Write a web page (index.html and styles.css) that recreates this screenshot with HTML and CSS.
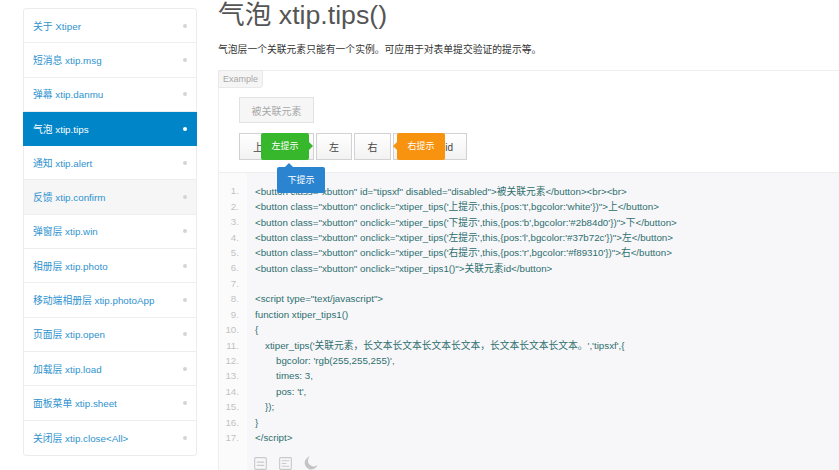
FILE: index.html
```html
<!DOCTYPE html>
<html lang="zh">
<head>
<meta charset="utf-8">
<title>气泡 xtip.tips()</title>
<link rel="stylesheet" href="styles.css">
</head>
<body>
<div class="page">
  <nav class="side">
    <a class="item"><span>关于 Xtiper</span><i class="dot"></i></a>
    <a class="item"><span>短消息 xtip.msg</span><i class="dot"></i></a>
    <a class="item"><span>弹幕 xtip.danmu</span><i class="dot"></i></a>
    <a class="item active"><span>气泡 xtip.tips</span><i class="dot"></i></a>
    <a class="item"><span>通知 xtip.alert</span><i class="dot"></i></a>
    <a class="item hover"><span>反馈 xtip.confirm</span><i class="dot"></i></a>
    <a class="item"><span>弹窗层 xtip.win</span><i class="dot"></i></a>
    <a class="item"><span>相册层 xtip.photo</span><i class="dot"></i></a>
    <a class="item"><span>移动端相册层 xtip.photoApp</span><i class="dot"></i></a>
    <a class="item"><span>页面层 xtip.open</span><i class="dot"></i></a>
    <a class="item"><span>加载层 xtip.load</span><i class="dot"></i></a>
    <a class="item"><span>面板菜单 xtip.sheet</span><i class="dot"></i></a>
    <a class="item"><span>关闭层 xtip.close&lt;All&gt;</span><i class="dot"></i></a>
  </nav>
  <main class="main">
    <h1 class="title">气泡 xtip.tips()</h1>
    <p class="desc">气泡层一个关联元素只能有一个实例。可应用于对表单提交验证的提示等。</p>
    <section class="box">
      <div class="tag">Example</div>
      <div class="demo">
        <div class="row"><button class="xbtn wide" disabled>被关联元素</button></div>
        <div class="row">
          <button class="xbtn up">上</button>
          <button class="xbtn sq">左</button>
          <button class="xbtn sq">右</button>
          <button class="xbtn last">关联元素id</button>
        </div>
        <div class="tip green">左提示</div>
        <div class="tip orange">右提示</div>
        <div class="tip blue">下提示</div>
      </div>
      <div class="code">
        <ol class="lines">
          <li><b>1.</b><code>&lt;button class="xbutton" id="tipsxf" disabled="disabled"&gt;被关联元素&lt;/button&gt;&lt;br&gt;&lt;br&gt;</code></li>
          <li><b>2.</b><code>&lt;button class="xbutton" onclick="xtiper_tips('上提示',this,{pos:'t',bgcolor:'white'})"&gt;上&lt;/button&gt;</code></li>
          <li><b>3.</b><code>&lt;button class="xbutton" onclick="xtiper_tips('下提示',this,{pos:'b',bgcolor:'#2b84d0'})"&gt;下&lt;/button&gt;</code></li>
          <li><b>4.</b><code>&lt;button class="xbutton" onclick="xtiper_tips('左提示',this,{pos:'l',bgcolor:'#37b72c'})"&gt;左&lt;/button&gt;</code></li>
          <li><b>5.</b><code>&lt;button class="xbutton" onclick="xtiper_tips('右提示',this,{pos:'r',bgcolor:'#f89310'})"&gt;右&lt;/button&gt;</code></li>
          <li><b>6.</b><code>&lt;button class="xbutton" onclick="xtiper_tips1()"&gt;关联元素id&lt;/button&gt;</code></li>
          <li><b>7.</b><code></code></li>
          <li><b>8.</b><code>&lt;script type="text/javascript"&gt;</code></li>
          <li><b>9.</b><code>function xtiper_tips1()</code></li>
          <li><b>10.</b><code>{</code></li>
          <li><b>11.</b><code class="in1">xtiper_tips('关联元素<span class="pc">，</span>长文本长文本长文本长文本<span class="pc">，</span>长文本长文本长文本。','tipsxf',{</code></li>
          <li><b>12.</b><code class="in2">bgcolor: 'rgb(255,255,255)',</code></li>
          <li><b>13.</b><code class="in2">times: 3,</code></li>
          <li><b>14.</b><code class="in2">pos: 't',</code></li>
          <li><b>15.</b><code class="in1">});</code></li>
          <li><b>16.</b><code>}</code></li>
          <li><b>17.</b><code>&lt;/script&gt;</code></li>
        </ol>
        <div class="tools">
          <svg class="ico" viewBox="0 0 14 14"><rect x="0.7" y="0.7" width="12.6" height="12.6" rx="1.5" fill="none" stroke="#c9c9c9" stroke-width="1.2"/><path d="M3 5.5h8M3 9h8" stroke="#c9c9c9" stroke-width="1.2"/></svg>
          <svg class="ico" viewBox="0 0 14 14"><rect x="0.7" y="0.7" width="12.6" height="12.6" rx="1" fill="none" stroke="#c9c9c9" stroke-width="1.2"/><path d="M3 4h8M3 7h5M3 10h8" stroke="#c9c9c9" stroke-width="1.2"/></svg>
          <svg class="ico moon" viewBox="0 0 15 15"><path d="M6.2 0.6A7 7 0 1 0 14.4 9.6 6 6 0 0 1 6.2 0.6Z" fill="#c4c4c4"/></svg>
        </div>
      </div>
    </section>
  </main>
</div>
</body>
</html>
```

FILE: styles.css
```css
* { box-sizing: border-box; }
html, body { margin: 0; padding: 0; background: #fff; }
body { font-family: "Liberation Sans", "Noto Sans CJK SC", sans-serif; }
.page { display: flex; width: 839px; height: 470px; overflow: hidden; align-items: flex-start; }

.side {
  width: 174px; margin: 8px 0 0 23px; flex: none;
  display: flex; flex-direction: column;
  border: 1px solid #ececec; border-radius: 3px;
  background: #fff;
}
.item {
  height: 34.3px; padding: 0 9px 0 9px; flex: none;
  display: flex; align-items: center; justify-content: space-between;
  font-size: 9.8px; color: #2f93cf;
  border-bottom: 1px solid #eeeeee;
}
.item:last-child { border-bottom: 0; }
.dot { width: 4px; height: 4px; border-radius: 50%; background: #d4d4d4; }
.item.active { background: #0086c8; color: #fff; margin: 0 -1px; padding: 0 10px; border-bottom-color: #0086c8; }
.item.active .dot { background: #fff; }
.item.hover { background: #f6f6f6; }

.main { flex: 1; min-width: 0; margin-left: 21px; }
.title { margin: -4px 0 0; font-size: 26.7px; line-height: 38px; font-weight: 400; color: #555; }
.desc { margin: 8px 0 0; font-size: 9.8px; line-height: 16px; color: #333; }

.box { margin-top: 12px; border: 1px solid #eeeeee; border-right: 0; }
.tag {
  width: 45px; height: 18px; margin: -1px 0 0 -1px;
  background: #f5f5f5; border: 1px solid #e9e9e9; border-radius: 3px 0 3px 0;
  font-size: 9px; line-height: 16px; text-align: center; color: #a8a8a8;
}
.demo {
  position: relative; height: 84px; padding: 9px 0 0 20px;
  display: flex; flex-direction: column; gap: 10px;
}
.row { display: flex; gap: 2px; }
.xbtn {
  height: 27px; padding: 0; font-size: 10px; color: #444;
  background: linear-gradient(#fff, #f2f2f2); border: 1px solid #d2d2d2;
  font-family: "Liberation Sans", "Noto Sans CJK SC", sans-serif;
}
.wide { width: 75px; }
.xbtn[disabled] { height: 26px; color: #a8a8a8; background: #f6f6f6; border-color: #e2e2e2; }
.up { width: 75px; text-align: left; padding-left: 13px; }
.sq { width: 36px; }
.sq + .sq { width: 37px; }
.last { width: 74px; text-align: right; padding-right: 13px; }

.tip {
  position: absolute; width: 48px; height: 27px; border-radius: 2px;
  font-size: 9px; line-height: 27px; text-align: center; color: #fff;
}
.tip::after { content: ""; position: absolute; width: 0; height: 0; border: 4px solid transparent; }
.green { left: 42px; top: 45px; background: #37b72c; }
.green::after { left: 100%; top: 9px; border-left-color: #37b72c; }
.orange { left: 178px; top: 45px; background: #f89310; }
.orange::after { right: 100%; top: 9px; border-right-color: #f89310; }
.blue { left: 58px; top: 79px; height: 26px; line-height: 26px; background: #2b84d0; }
.blue::after { left: 8px; bottom: 100%; border-bottom-color: #2b84d0; }

.code {
  padding-top: 10px; height: 320px; border-top: 1px solid #eeeeee;
  background: linear-gradient(to right, #fbfbfc 28px, #f7f7f9 28px);
}
.lines { margin: 0; padding: 0; list-style: none; }
.lines li { display: flex; height: 15.44px; align-items: center; font-size: 9.75px; color: #2f6f6f; }
.lines b { flex: none; width: 28px; padding-right: 8px; text-align: right; font-weight: 400; color: #c2c2c2; }
.lines code { font: inherit; padding-left: 8px; white-space: pre; }
.lines .in1 { padding-left: 18px; }
.lines .in2 { padding-left: 29px; }
.pc { font-family: "Noto Sans CJK TC", sans-serif; }
.tools { margin-top: 11px; padding-left: 35px; display: flex; gap: 12px; align-items: center; }
.ico { width: 13px; height: 13px; display: block; }
.moon { width: 14px; height: 14px; }
```
